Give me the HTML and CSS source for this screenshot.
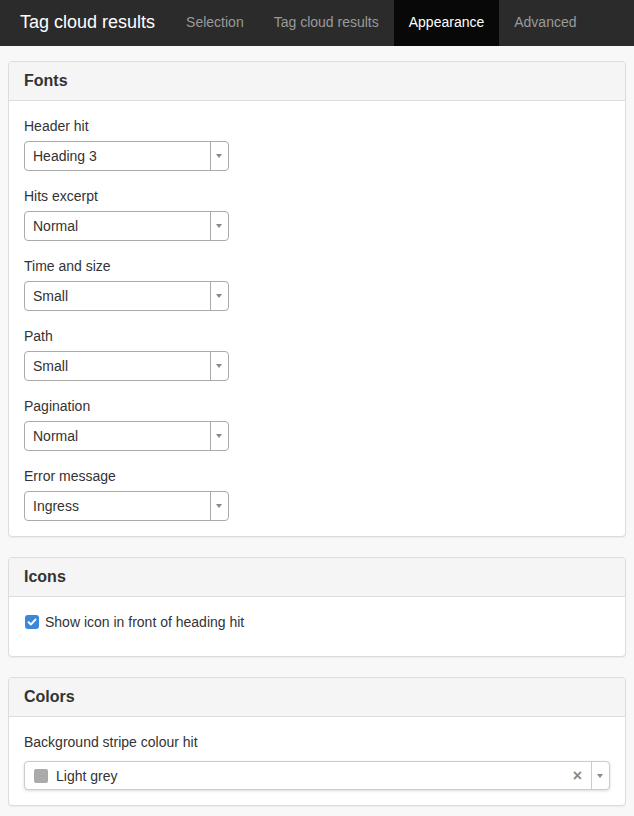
FILE: index.html
```html
<!DOCTYPE html>
<html lang="en">
<head>
    <meta charset="UTF-8">
    <meta name="viewport" content="width=device-width, initial-scale=1.0">
    <title>Tag cloud results</title>
    <link rel="stylesheet" href="styles.css">
</head>
<body>

    <!-- Top Navigation -->
    <nav class="navbar">
        <span class="brand">Tag cloud results</span>
        <a class="nav-link" href="#">Selection</a>
        <a class="nav-link" href="#">Tag cloud results</a>
        <a class="nav-link active" href="#">Appearance</a>
        <a class="nav-link" href="#">Advanced</a>
    </nav>

    <main class="content">

        <!-- Fonts -->
        <section class="panel">
            <div class="panel-heading">Fonts</div>
            <div class="panel-body">
                <div class="form-group">
                    <label>Header hit</label>
                    <div class="select"><span class="select-text">Heading 3</span><span class="select-arrow"></span></div>
                </div>
                <div class="form-group">
                    <label>Hits excerpt</label>
                    <div class="select"><span class="select-text">Normal</span><span class="select-arrow"></span></div>
                </div>
                <div class="form-group">
                    <label>Time and size</label>
                    <div class="select"><span class="select-text">Small</span><span class="select-arrow"></span></div>
                </div>
                <div class="form-group">
                    <label>Path</label>
                    <div class="select"><span class="select-text">Small</span><span class="select-arrow"></span></div>
                </div>
                <div class="form-group">
                    <label>Pagination</label>
                    <div class="select"><span class="select-text">Normal</span><span class="select-arrow"></span></div>
                </div>
                <div class="form-group">
                    <label>Error message</label>
                    <div class="select"><span class="select-text">Ingress</span><span class="select-arrow"></span></div>
                </div>
            </div>
        </section>

        <!-- Icons -->
        <section class="panel">
            <div class="panel-heading">Icons</div>
            <div class="panel-body">
                <div class="checkbox">
                    <span class="check-box">
                        <svg width="10" height="10" viewBox="0 0 10 10"><path d="M1.6 5.2 L4 7.4 L8.4 2.6" fill="none" stroke="#fff" stroke-width="2" stroke-linecap="round" stroke-linejoin="round"/></svg>
                    </span>
                    <span>Show icon in front of heading hit</span>
                </div>
            </div>
        </section>

        <!-- Colors -->
        <section class="panel">
            <div class="panel-heading">Colors</div>
            <div class="panel-body">
                <div class="form-group">
                    <label>Background stripe colour hit</label>
                    <div class="select select-wide">
                        <span class="swatch"></span>
                        <span class="select-text">Light grey</span>
                        <span class="select-clear">&times;</span>
                        <span class="select-arrow"></span>
                    </div>
                </div>
            </div>
        </section>

    </main>

</body>
</html>
```

FILE: styles.css
```css
/* General Body Styling */
body {
    font-family: "Liberation Sans", Arial, sans-serif;
    font-size: 14px;
    color: #333;
    background-color: #f8f8f8;
    margin: 0;
}

/* Top Navigation */
.navbar {
    display: flex;
    align-items: stretch;
    height: 46px;
    background-color: #2b2b2b;
}

.brand {
    color: #fff;
    font-size: 18px;
    line-height: 45px;
    padding: 0 16px 0 20px;
}

.nav-link {
    color: #9a9a9a;
    text-decoration: none;
    line-height: 45px;
    padding: 0 15px;
}

.nav-link.active {
    color: #fff;
    background-color: #080808;
}

/* Panels */
.content {
    padding: 15px 8px 0;
}

.panel {
    background-color: #fff;
    border: 1px solid #ddd;
    border-radius: 4px;
    margin-bottom: 20px;
    box-shadow: 0 1px 1px rgba(0, 0, 0, 0.05);
}

.panel-heading {
    background-color: #f5f5f5;
    border-bottom: 1px solid #ddd;
    border-radius: 3px 3px 0 0;
    padding: 10px 15px;
    font-size: 16px;
    font-weight: bold;
    line-height: 18px;
}

.panel-body {
    padding: 15px;
}

/* Form Groups */
.form-group {
    margin-bottom: 15px;
}

.form-group:last-child {
    margin-bottom: 0;
}

label {
    display: block;
    line-height: 20px;
    margin-bottom: 5px;
}

/* Dropdowns */
.select {
    display: flex;
    align-items: center;
    width: 203px;
    height: 28px;
    border: 1px solid #aaa;
    border-radius: 4px;
    background-color: #fff;
    line-height: 30px;
}

.select-text {
    flex: 1;
    padding-left: 8px;
}

.select-arrow {
    width: 17px;
    height: 100%;
    border-left: 1px solid #aaa;
    position: relative;
}

.select-arrow::after {
    content: "";
    position: absolute;
    left: 5px;
    top: 12px;
    border-left: 3px solid transparent;
    border-right: 3px solid transparent;
    border-top: 4px solid #888;
}

.select-wide {
    width: 584px;
    height: 27px;
    margin-top: 9px;
    border-color: #ccc;
    box-shadow: 0 1px 3px rgba(0, 0, 0, 0.15);
}

.select-wide .select-arrow {
    border-left-color: #ccc;
}

.swatch {
    width: 14px;
    height: 14px;
    margin-left: 9px;
    background-color: #aaa;
    border-radius: 2px;
}

.select-wide .select-text {
    padding-left: 8px;
}

.select-clear {
    color: #888;
    font-size: 16px;
    font-weight: bold;
    padding-right: 9px;
}

/* Checkbox */
.checkbox {
    display: flex;
    align-items: center;
    gap: 6px;
    line-height: 20px;
    padding: 0 1px 9px;
}

.check-box {
    display: flex;
    align-items: center;
    justify-content: center;
    width: 14px;
    height: 14px;
    border-radius: 3px;
    background-color: #3b88d8;
}
```
